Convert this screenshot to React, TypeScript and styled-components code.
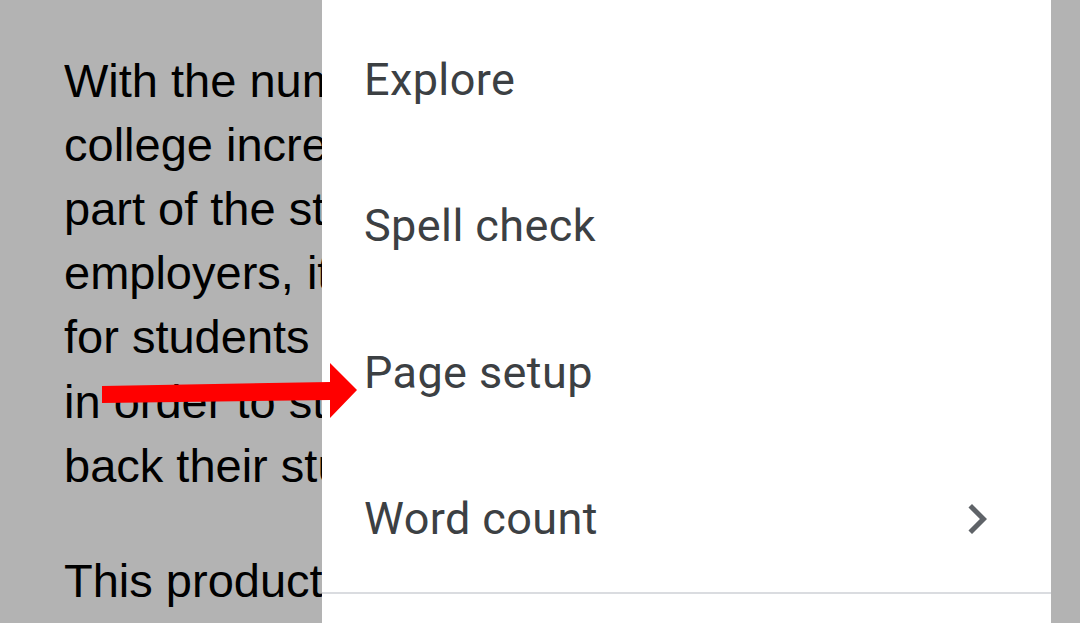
import React from "react";
import styled, { createGlobalStyle } from "styled-components";

const Global = createGlobalStyle`
  html, body { margin: 0; padding: 0; background: #b3b3b3; }
  #root { width: 1080px; height: 623px; }
`;

const Screen = styled.div`
  position: relative;
  width: 1080px;
  height: 623px;
  overflow: hidden;
  background: #b3b3b3;
`;

const Doc = styled.div`
  width: 322px;
  height: 623px;
  overflow: hidden;
  box-sizing: border-box;
  padding: 48.5px 0 0 64px;
  font-family: "Liberation Sans", Arial, sans-serif;
  font-size: 47px;
  line-height: 64.2px;
  color: #000;
`;

const Paragraph = styled.p`
  margin: 0 0 51px 0;
`;

const Line = styled.span`
  display: block;
  white-space: nowrap;
  overflow: hidden;
`;

const Menu = styled.nav`
  position: absolute;
  top: 0;
  left: 322px;
  width: 729px;
  height: 623px;
  background: #ffffff;
  padding-top: 6px;
  box-sizing: border-box;
  display: flex;
  flex-direction: column;
`;

const Item = styled.div`
  height: 146.5px;
  flex: 0 0 146.5px;
  display: flex;
  align-items: center;
  justify-content: space-between;
  padding: 0 44.5px 0 42px;
  font-family: Roboto, "Noto Sans", sans-serif;
  font-size: 45px;
  letter-spacing: 0.4px;
  line-height: 53px;
  color: #3c4043;
`;

const Divider = styled.div`
  height: 2px;
  background: #dadce0;
`;

const Chevron = styled.svg`
  width: 60px;
  height: 60px;
  fill: #5f6368;
  flex: none;
`;

const Arrow = styled.svg`
  position: absolute;
  left: 0;
  top: 0;
  width: 1080px;
  height: 623px;
  pointer-events: none;
`;

const items: { label: string; sub?: boolean }[] = [
  { label: "Explore" },
  { label: "Spell check" },
  { label: "Page setup" },
  { label: "Word count", sub: true },
];

export default function App() {
  return (
    <Screen>
      <Global />
      <Doc>
        <Paragraph>
          <Line>With the number of students going to</Line>
          <Line>college increases every year, the biggest</Line>
          <Line>part of the student experience that</Line>
          <Line>employers, it is becoming harder</Line>
          <Line>for students to stand out from</Line>
          <Line>in order to stand out and pay</Line>
          <Line>back their student loans.</Line>
        </Paragraph>
        <Paragraph>
          <Line>This product is designed to help</Line>
        </Paragraph>
      </Doc>
      <Menu>
        {items.map((it) => (
          <Item key={it.label}>
            <span>{it.label}</span>
            {it.sub && (
              <Chevron viewBox="0 0 24 24">
                <path d="M10 6L8.59 7.41 13.17 12l-4.58 4.59L10 18l6-6z" />
              </Chevron>
            )}
          </Item>
        ))}
        <Divider />
      </Menu>
      <Arrow viewBox="0 0 1080 623">
        <polygon
          points="102,386 330,382 330,363 357,390 330,418 330,400 102,403"
          fill="#ff0000"
        />
      </Arrow>
    </Screen>
  );
}
